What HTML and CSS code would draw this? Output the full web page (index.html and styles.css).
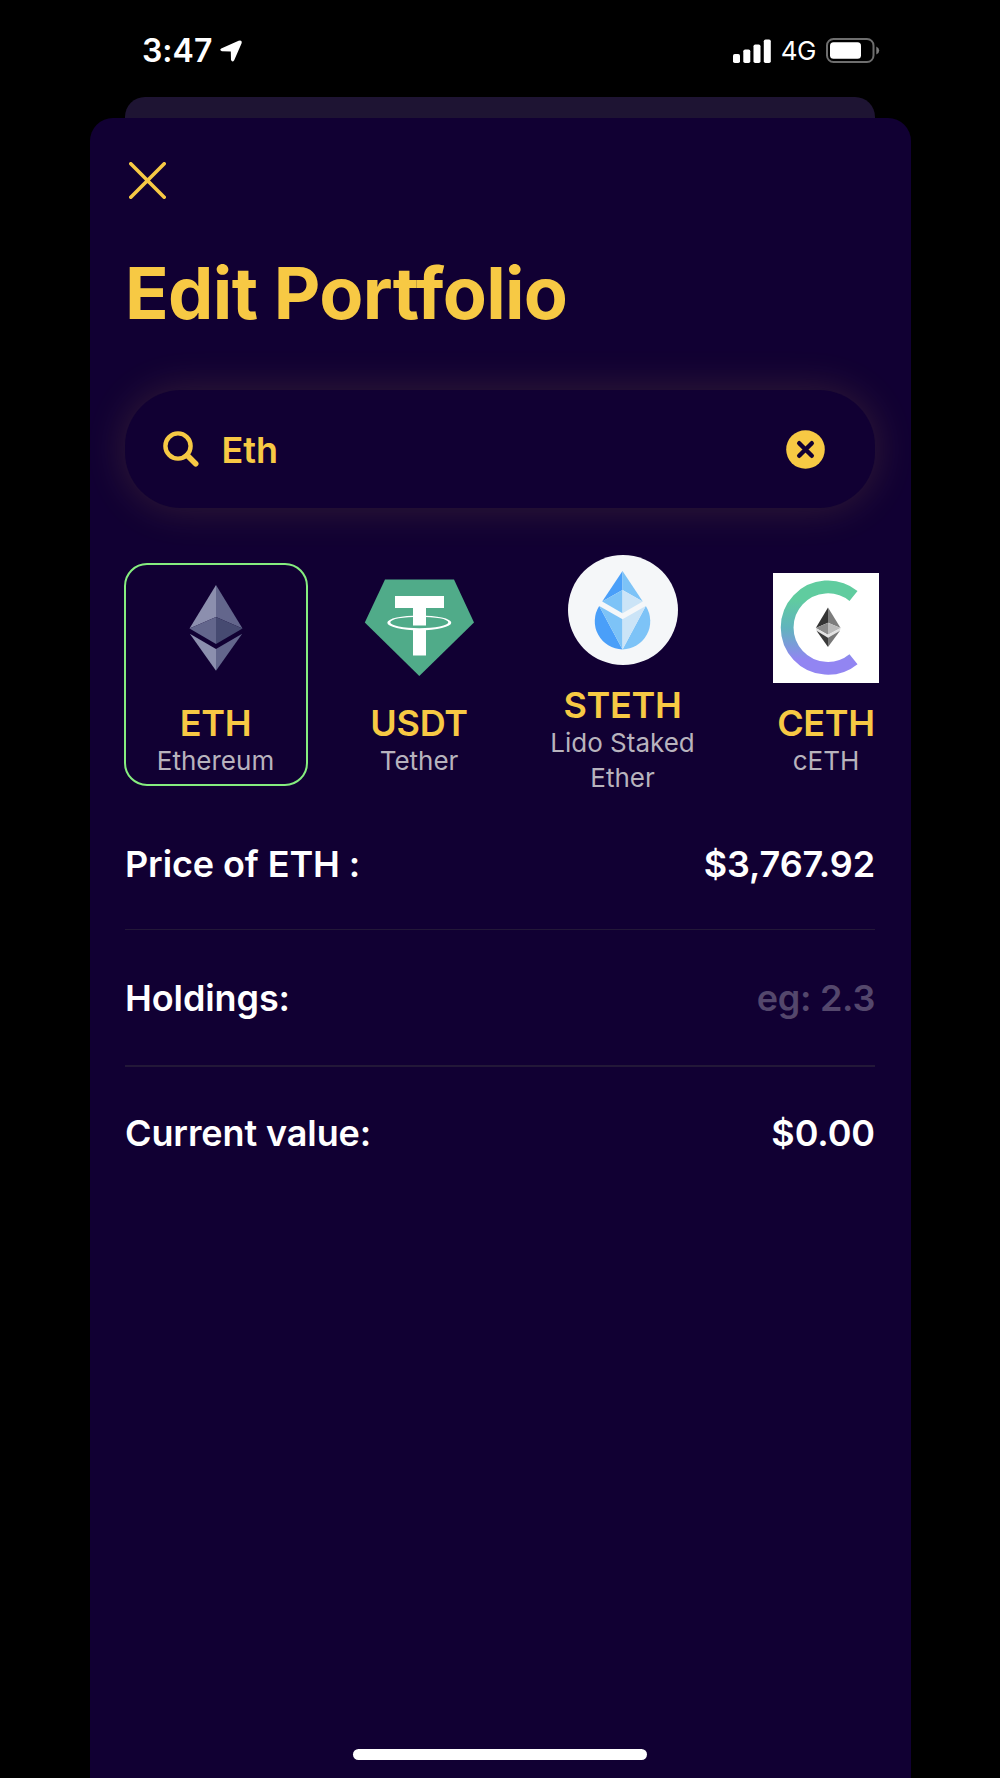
FILE: index.html
```html
<!DOCTYPE html>
<html lang="en">
<head>
    <meta charset="UTF-8">
    <meta name="viewport" content="width=device-width, initial-scale=1.0">
    <title>Edit Portfolio</title>
    <link rel="stylesheet" href="styles.css">
</head>
<body>
    <div class="status-bar">
        <div class="status-left">
            <span class="time">3:47</span>
            <svg class="location" width="22" height="22" viewBox="0 0 22 22">
                <path d="M1.2 8.4 L18.6 0.7 Q22.4 -0.4 21.6 3.2 L14.2 20.2 Q12.4 22.8 11 20 L10.8 11.6 L1.9 11.2 Q-1 10 1.2 8.4 Z" fill="#fff"/>
            </svg>
        </div>
        <div class="status-right">
            <svg width="38" height="24" viewBox="0 0 38 24" fill="#fff">
                <rect x="0" y="15" width="7" height="9" rx="1.8"/>
                <rect x="10.3" y="10.5" width="7" height="13.5" rx="1.8"/>
                <rect x="20.5" y="5.5" width="7" height="18.5" rx="1.8"/>
                <rect x="30.8" y="0.5" width="7" height="23.5" rx="1.8"/>
            </svg>
            <span class="network">4G</span>
            <svg width="54" height="25" viewBox="0 0 54 25">
                <rect x="1" y="1" width="46.5" height="23" rx="6.5" fill="none" stroke="#6e6e6e" stroke-width="2"/>
                <rect x="4" y="4.3" width="31" height="16.4" rx="3.5" fill="#fff"/>
                <path d="M50.3 8.5 Q53.2 9.8 53.2 12.5 Q53.2 15.2 50.3 16.5 Z" fill="#7c7c7c"/>
            </svg>
        </div>
    </div>

    <div class="back-card"></div>

    <div class="sheet">
        <svg class="close" width="37" height="37" viewBox="0 0 37 37" stroke="#f7c944" stroke-width="3.6" stroke-linecap="round">
            <path d="M1.8 1.8 L35.2 35.2 M35.2 1.8 L1.8 35.2"/>
        </svg>

        <h1>Edit Portfolio</h1>

        <div class="search">
            <svg width="36" height="36" viewBox="0 0 36 36" fill="none" stroke="#f7c944" stroke-linecap="round">
                <circle cx="15" cy="15" r="12.6" stroke-width="4.4"/>
                <path d="M24.2 24.2 L32.7 32.7" stroke-width="5.6"/>
            </svg>
            <span class="query">Eth</span>
            <svg class="clear" width="39" height="39" viewBox="0 0 39 39">
                <circle cx="19.5" cy="19.5" r="19.3" fill="#f7c944"/>
                <path d="M13.2 13.2 L25.8 25.8 M25.8 13.2 L13.2 25.8" stroke="#110033" stroke-width="4.4" stroke-linecap="round"/>
            </svg>
        </div>

        <div class="coins">
            <div class="coin selected">
                <svg width="110" height="110" viewBox="0 0 110 110">
                    <path d="M55 12 L28.5 55.5 L55 44 Z" fill="#8c8fae"/>
                    <path d="M55 12 L81.5 55.5 L55 44 Z" fill="#63668c"/>
                    <path d="M28.5 55.5 L55 44 V71 Z" fill="#63668c"/>
                    <path d="M81.5 55.5 L55 44 V71 Z" fill="#464a71"/>
                    <path d="M28.8 60.8 L55 76 V97.8 Z" fill="#8c8fae"/>
                    <path d="M81.2 60.8 L55 76 V97.8 Z" fill="#63668c"/>
                </svg>
                <div class="symbol">ETH</div>
                <div class="name">Ethereum</div>
            </div>
            <div class="coin">
                <svg width="110" height="110" viewBox="0 0 110 110">
                    <path d="M21 6.5 H90 L110 49.5 L55.3 103 L0.8 49.5 Z" fill="#50ab89"/>
                    <path d="M31 23 H80 V35 H62 V52.6 H49 V35 H31 Z" fill="#fff"/>
                    <path d="M49 56 H62 V82.5 H49 Z" fill="#fff"/>
                    <path fill-rule="evenodd" fill="#fff" d="M23.3 49.7 A32 7.3 0 0 1 87.3 49.7 A32 7.6 0 0 1 23.3 49.7 Z M26.3 49.3 A29 5.9 0 0 0 84.3 49.3 A29 5.6 0 0 0 26.3 49.3 Z"/>
                </svg>
                <div class="symbol">USDT</div>
                <div class="name">Tether</div>
            </div>
            <div class="coin">
                <svg width="110" height="110" viewBox="0 0 110 110">
                    <circle cx="55" cy="55" r="55" fill="#f5f7f9"/>
                    <path d="M54.5 16 L34.2 46.5 L54.5 35 Z" fill="#4a9ff9"/>
                    <path d="M54.5 16 L74.8 46.5 L54.5 35 Z" fill="#7dc3f7"/>
                    <path d="M34.2 46.5 L54.5 35 V58.2 Z" fill="#7dc3f7"/>
                    <path d="M74.8 46.5 L54.5 35 V58.2 Z" fill="#cbe4f7"/>
                    <path d="M31.2 51 L54.5 94.5 A28.3 28.3 0 0 1 31.2 51 Z" fill="#4a9ff9"/>
                    <path d="M77.8 51 L54.5 94.5 A28.3 28.3 0 0 0 77.8 51 Z" fill="#7dc3f7"/>
                    <path d="M31.2 51 L54.5 64.3 V94.5 Z" fill="#7dc3f7"/>
                    <path d="M77.8 51 L54.5 64.3 V94.5 Z" fill="#cbe4f7"/>
                </svg>
                <div class="symbol">STETH</div>
                <div class="name">Lido Staked Ether</div>
            </div>
            <div class="coin">
                <svg width="106" height="110" viewBox="0 0 106 110">
                    <defs>
                        <linearGradient id="ring" x1="0" y1="0" x2="0" y2="1">
                            <stop offset="0.15" stop-color="#60cc9f"/>
                            <stop offset="0.5" stop-color="#61b4bd"/>
                            <stop offset="0.9" stop-color="#9285f2"/>
                        </linearGradient>
                    </defs>
                    <rect width="106" height="110" fill="#fff"/>
                    <path d="M80.5 23 A40.7 40.7 0 1 0 80.5 86.2" fill="none" stroke="url(#ring)" stroke-width="12.8"/>
                    <path d="M55 34.5 L42.8 55 L55 49.8 Z" fill="#343434"/>
                    <path d="M55 34.5 L67.6 55 L55 49.8 Z" fill="#7d7d7d"/>
                    <path d="M42.8 55 L55 49.8 V61.8 Z" fill="#8b8b8b"/>
                    <path d="M67.6 55 L55 49.8 V61.8 Z" fill="#bababa"/>
                    <path d="M42.8 55 L55 61.8 L67.6 55 L67 57.8 L55 64.8 L43.5 57.8 Z" fill="#e2e2e2"/>
                    <path d="M43.5 57.8 L55 64.8 V74 Z" fill="#3a3a3a"/>
                    <path d="M67 57.8 L55 64.8 V74 Z" fill="#777"/>
                </svg>
                <div class="symbol">CETH</div>
                <div class="name">cETH</div>
            </div>
        </div>

        <div class="details">
            <div class="row">
                <span class="label">Price of ETH :</span>
                <span class="amount">$3,767.92</span>
            </div>
            <div class="row">
                <span class="label">Holdings:</span>
                <span class="placeholder">eg: 2.3</span>
            </div>
            <div class="row">
                <span class="label">Current value:</span>
                <span class="amount">$0.00</span>
            </div>
        </div>

        <div class="home-indicator"></div>
    </div>
</body>
</html>
```

FILE: styles.css
```css
* {
    box-sizing: border-box;
}
body {
    margin: 0;
    height: 1778px;
    background: #000;
    color: #fff;
    font-family: Inter, "Liberation Sans", sans-serif;
    font-variant-ligatures: none;
    font-feature-settings: "calt" 0;
    display: flex;
    flex-direction: column;
    overflow: hidden;
}
svg {
    display: block;
    flex-shrink: 0;
}
.status-bar {
    height: 97px;
    padding: 30px 120px 0 142px;
    display: flex;
    justify-content: space-between;
    align-items: flex-start;
}
.status-left,
.status-right {
    display: flex;
    align-items: center;
    height: 41px;
}
.time {
    font-size: 32px;
    font-weight: 600;
    line-height: 40px;
}
.location {
    margin-left: 8px;
}
.network {
    margin: 1px 10px 0 9.5px;
    font-size: 26px;
    line-height: 32px;
    letter-spacing: -0.5px;
}
.back-card {
    height: 21px;
    margin: 0 125px;
    background: #1e1433;
    border-radius: 20px 20px 0 0;
}
.sheet {
    flex: 1;
    margin: 0 89px 0 89.5px;
    padding: 43.5px 36px 18px 35.5px;
    background: #110033;
    border-radius: 23px 23px 0 0;
    display: flex;
    flex-direction: column;
    overflow: hidden;
}
.close {
    margin-left: 4px;
}
h1 {
    margin: 50.5px 0 0;
    font-size: 72px;
    font-weight: 700;
    line-height: 88px;
    letter-spacing: -0.65px;
    color: #f7c944;
}
.search {
    height: 118px;
    margin-top: 53px;
    padding: 0 50.5px 0 38px;
    border-radius: 56px;
    background: #110033;
    box-shadow: 0 0 42px rgba(247, 201, 68, 0.15);
    display: flex;
    align-items: center;
}
.query {
    margin: 1px 0 0 22.5px;
    font-size: 36px;
    font-weight: 600;
    line-height: 44px;
    color: #f7c944;
}
.clear {
    margin-left: auto;
}
.coins {
    display: flex;
    align-items: center;
    gap: 19.5px;
    height: 258px;
    margin: 37px 0 0 -1.5px;
}
.coin {
    flex: 0 0 184px;
    display: flex;
    flex-direction: column;
    align-items: center;
    padding: 8px 12px 6px;
    border: 2px solid transparent;
    border-radius: 23px;
    text-align: center;
}
.selected {
    border-color: #86ed7f;
}
.symbol {
    margin-top: 20px;
    font-size: 36px;
    font-weight: 600;
    line-height: 40px;
    letter-spacing: -0.3px;
    color: #f7c944;
}
.name {
    font-size: 26px;
    line-height: 35px;
    color: #b8b3bd;
}
.details {
    margin-top: -5px;
}
.row {
    display: flex;
    justify-content: space-between;
    align-items: center;
    height: 131px;
    font-size: 36px;
    font-weight: 600;
    line-height: 44px;
    letter-spacing: -0.1px;
}
.row + .row {
    height: 136px;
    border-top: 1px solid #231838;
}
.row:last-child {
    height: 133px;
    border-top-width: 2px;
}
.placeholder {
    color: #54476c;
    letter-spacing: -0.3px;
}
.home-indicator {
    width: 294px;
    height: 11px;
    margin: auto auto 0;
    border-radius: 6px;
    background: #fff;
}
```
